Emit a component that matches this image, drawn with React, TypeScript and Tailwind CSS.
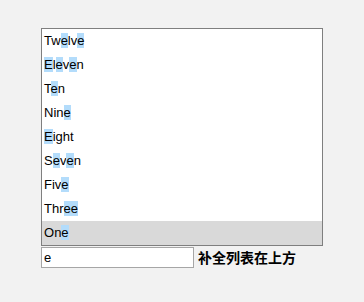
import React from "react";

const items = ["Twelve", "Eleven", "Ten", "Nine", "Eight", "Seven", "Five", "Three", "One"];
const query = "e";

function Highlighted({ text }: { text: string }) {
  return (
    <>
      {text.split("").map((ch, i) =>
        ch.toLowerCase() === query ? (
          <span key={i} className="bg-[#b3dcfb]">
            {ch}
          </span>
        ) : (
          <span key={i}>{ch}</span>
        )
      )}
    </>
  );
}

export default function App() {
  return (
    <div className="min-h-[302px] w-[364px] bg-[#f2f2f2] pl-[41px] pt-[28px] font-['Liberation_Sans',Arial,sans-serif] text-[13px] text-black">
      <div className="w-[282px] border border-[#7f7f7f] bg-white">
        {items.map((item) => (
          <div
            key={item}
            className={`h-[24px] pl-[2px] leading-[24px] ${item === "One" ? "bg-[#d9d9d9]" : ""}`}
          >
            <Highlighted text={item} />
          </div>
        ))}
      </div>
      <div className="mt-[1px] flex items-center gap-[4px]">
        <input
          readOnly
          value="e"
          className="h-[21px] w-[153px] border border-[#a6a6a6] bg-white px-[2px] text-[13px] text-black outline-none"
        />
        <span className="font-['Noto_Sans_CJK_SC',sans-serif] text-[14px] font-bold leading-[21px]">
          补全列表在上方
        </span>
      </div>
    </div>
  );
}
